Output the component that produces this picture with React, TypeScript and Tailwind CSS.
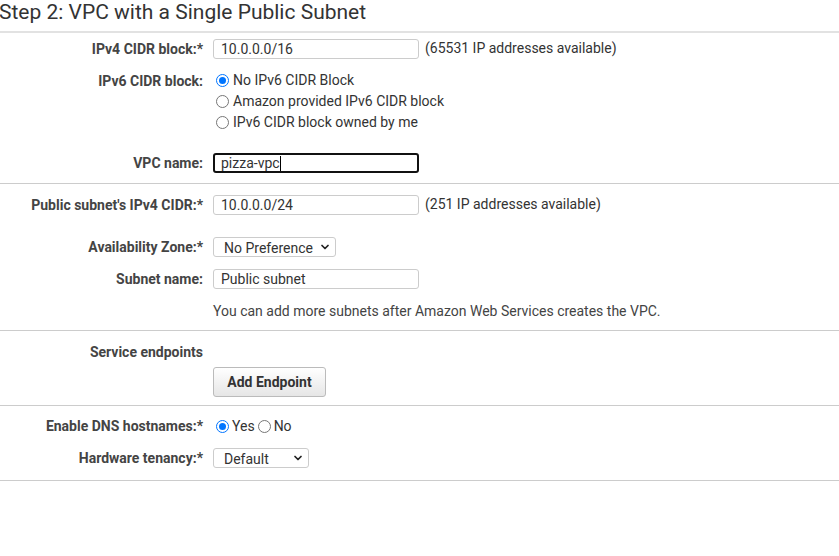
import React from 'react'
import { ChevronDown } from 'lucide-react'

const Label = ({ children }: { children: React.ReactNode }) => (
    <div className="w-[203px] shrink-0 text-right font-bold text-[#444] leading-[20px] mr-[10px]">{children}</div>
)

const TextBox = ({ value, width = 'w-[206px]' }: { value: string; width?: string }) => (
    <div className={`${width} h-[20px] border border-[#ccc] rounded-[3px] bg-white px-[7px] flex items-center text-[#333] leading-none`}>
        {value}
    </div>
)

const SelectBox = ({ value, width }: { value: string; width: string }) => (
    <div className={`${width} h-[20px] border border-[#ccc] rounded-[3px] bg-white pl-[10px] pr-[4px] flex items-center justify-between text-[#333] leading-none`}>
        <span className="pt-[2px]">{value}</span>
        <ChevronDown size={12} strokeWidth={3.5} className="text-[#222]" />
    </div>
)

const Radio = ({ checked }: { checked?: boolean }) =>
    checked ? (
        <span className="w-[13px] h-[13px] rounded-full border-[1.5px] border-[#0075ff] flex items-center justify-center shrink-0">
            <span className="block w-[7px] h-[7px] rounded-full bg-[#0075ff]" />
        </span>
    ) : (
        <span className="block w-[13px] h-[13px] rounded-full border border-[#767676] bg-white shrink-0" />
    )

const RadioOpt = ({ checked, text }: { checked?: boolean; text: string }) => (
    <div className="flex items-center h-[21px]">
        <span className="ml-[3px] mr-[4px]"><Radio checked={checked} /></span>
        <span className="text-[#333]">{text}</span>
    </div>
)

function App() {
    return (
        <div className="w-[839px] h-[556px] bg-white text-[14px] overflow-hidden" style={{ fontFamily: 'Roboto, "Liberation Sans", sans-serif' }}>
            <div className="h-[31px] text-[21px] text-[#333] leading-[24px] -ml-[1px]">Step 2: VPC with a Single Public Subnet</div>

            {/* vpc */}
            <div className="border-t-2 border-b border-t-[#e2e2e2] border-b-[#ccc] pt-[5px] pb-[10px]">
                <div className="flex items-center">
                    <Label>IPv4 CIDR block:*</Label>
                    <TextBox value="10.0.0.0/16" />
                    <span className="ml-[6px] text-[#333]">(65531 IP addresses available)</span>
                </div>
                <div className="flex mt-[11px]">
                    <div className="h-[21px] flex items-center"><Label>IPv6 CIDR block:</Label></div>
                    <div className="flex flex-col">
                        <RadioOpt checked text="No IPv6 CIDR Block" />
                        <RadioOpt text="Amazon provided IPv6 CIDR block" />
                        <RadioOpt text="IPv6 CIDR block owned by me" />
                    </div>
                </div>
                <div className="flex items-center mt-[20px]">
                    <Label>VPC name:</Label>
                    <div className="w-[206px] h-[20px] border-2 border-[#111] rounded-[3px] bg-white px-[6px] flex items-center text-[#333] leading-none">
                        pizza-vpc<span className="block w-[1px] h-[15px] bg-black" />
                    </div>
                </div>
            </div>

            {/* subnet */}
            <div className="border-b border-[#ccc] pt-[10px] pb-[9px]">
                <div className="flex items-center">
                    <Label>Public subnet's IPv4 CIDR:*</Label>
                    <TextBox value="10.0.0.0/24" />
                    <span className="ml-[6px] text-[#333]">(251 IP addresses available)</span>
                </div>
                <div className="flex items-center mt-[22px]">
                    <Label>Availability Zone:*</Label>
                    <SelectBox value="No Preference" width="w-[123px]" />
                </div>
                <div className="flex items-center mt-[12px]">
                    <Label>Subnet name:</Label>
                    <TextBox value="Public subnet" />
                </div>
                <div className="ml-[213px] mt-[12px] h-[20px] leading-[20px] text-[#444]">
                    You can add more subnets after Amazon Web Services creates the VPC.
                </div>
            </div>

            {/* endpoints */}
            <div className="border-b border-[#ccc] pt-[11px] pb-[8px]">
                <div className="flex items-center h-[20px]">
                    <Label>Service endpoints</Label>
                </div>
                <div className="ml-[213px] mt-[5px]">
                    <button className="w-[113px] h-[30px] border border-[#bbb] rounded-[3px] bg-gradient-to-b from-white to-[#e6e6e6] font-bold text-[#333]">
                        Add Endpoint
                    </button>
                </div>
            </div>

            {/* dns */}
            <div className="border-b border-[#ccc] pt-[10px] pb-[12px]">
                <div className="flex items-center h-[20px]">
                    <Label>Enable DNS hostnames:*</Label>
                    <span className="ml-[3px] mr-[3px]"><Radio checked /></span>
                    <span className="text-[#333]">Yes</span>
                    <span className="ml-[3px] mr-[3px]"><Radio /></span>
                    <span className="text-[#333]">No</span>
                </div>
                <div className="flex items-center mt-[12px]">
                    <Label>Hardware tenancy:*</Label>
                    <SelectBox value="Default" width="w-[96px]" />
                </div>
            </div>
        </div>
    )
}

export default App
